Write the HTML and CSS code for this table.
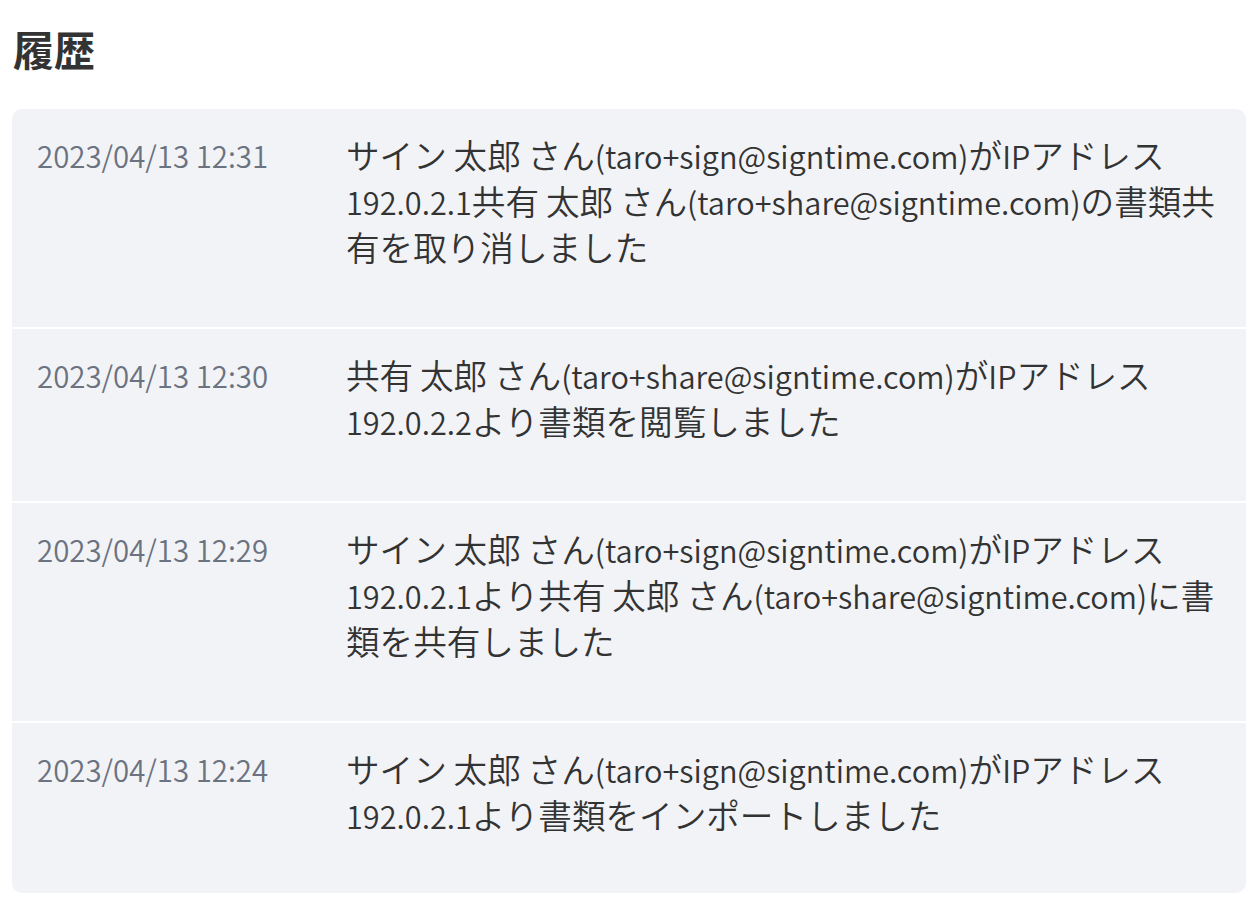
FILE: index.html
```html
<!DOCTYPE html>
<html lang="ja">
<head>
<meta charset="utf-8">
<link rel="stylesheet" href="styles.css">
</head>
<body>
<h1 class="title">履歴</h1>
<div class="card">
  <div class="row">
    <div class="date">2023/04/13 12:31</div>
    <div class="msg">サイン<span class="en"> </span>太郎<span class="en"> </span>さん<span class="en">(taro+sign@signtime.com)</span>が<span class="en">IP</span>アドレス<span class="en">192.0.2.1</span>共有<span class="en"> </span>太郎<span class="en"> </span>さん<span class="en">(taro+share@signtime.com)</span>の書類共有を取り消しました</div>
  </div>
  <div class="row">
    <div class="date">2023/04/13 12:30</div>
    <div class="msg">共有<span class="en"> </span>太郎<span class="en"> </span>さん<span class="en">(taro+share@signtime.com)</span>が<span class="en">IP</span>アドレス<span class="en">192.0.2.2</span>より書類を閲覧しました</div>
  </div>
  <div class="row">
    <div class="date">2023/04/13 12:29</div>
    <div class="msg">サイン<span class="en"> </span>太郎<span class="en"> </span>さん<span class="en">(taro+sign@signtime.com)</span>が<span class="en">IP</span>アドレス<span class="en">192.0.2.1</span>より共有<span class="en"> </span>太郎<span class="en"> </span>さん<span class="en">(taro+share@signtime.com)</span>に書類を共有しました</div>
  </div>
  <div class="row">
    <div class="date">2023/04/13 12:24</div>
    <div class="msg">サイン<span class="en"> </span>太郎<span class="en"> </span>さん<span class="en">(taro+sign@signtime.com)</span>が<span class="en">IP</span>アドレス<span class="en">192.0.2.1</span>より書類をインポートしました</div>
  </div>
</div>
</body>
</html>
```

FILE: styles.css
```css
html, body {
  margin: 0;
  padding: 0;
  background: #ffffff;
}
body {
  padding: 0 14px 0 12px;
  font-family: "Noto Sans CJK JP", "Noto Sans", sans-serif;
  color: #333333;
}
.title {
  margin: 0;
  padding: 18px 0 0 1px;
  height: 109px;
  box-sizing: border-box;
  font-size: 41px;
  line-height: 60px;
  font-weight: 700;
  color: #333333;
}
.card {
  background: #ffffff;
  border-radius: 10px;
  overflow: hidden;
  display: flex;
  flex-direction: column;
  gap: 2px;
}
.row {
  background: #f2f3f7;
  display: flex;
  padding: 23px 10px 57px 25px;
}
.row:last-child {
  padding-bottom: 55px;
}
.date {
  width: 309px;
  flex: none;
  font-size: 29.4px;
  line-height: 46px;
  font-weight: 350;
  color: #6b7280;
}
.msg {
  flex: 1;
  font-size: 33.6px;
  line-height: 46px;
  font-weight: 350;
  color: #333333;
}
.en {
  font-size: 30.7px;
  line-height: 1;
}
```
